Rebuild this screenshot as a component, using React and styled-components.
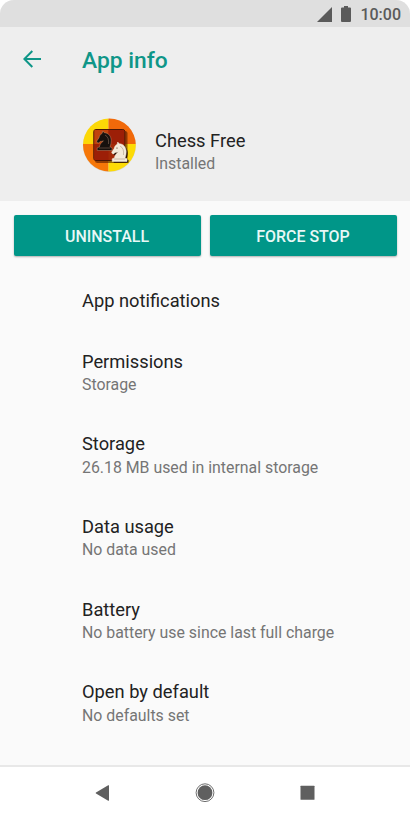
import React from "react";
import styled, { createGlobalStyle } from "styled-components";

const items = [
    { title: "App notifications" },
    { title: "Permissions", summary: "Storage" },
    { title: "Storage", summary: "26.18 MB used in internal storage" },
    { title: "Data usage", summary: "No data used" },
    { title: "Battery", summary: "No battery use since last full charge" },
    { title: "Open by default", summary: "No defaults set" },
];

const horse =
    "M1.200 19.500v-2.700l2.200-.9c.2-3 2.600-4.300 4-6.100-1 .5-2.200.7-3.200.6L2.600 12C1.600 12.200.4 11 .8 10L3 6.800C3.400 4.700 4.600 3.200 6.200 2.300L6.700 0 8.300 1.700C12.800 2 15.200 5.600 15.200 9.600c0 2.400-.5 4.500-1.200 6.300l2 .9v2.700z";

function ChessIcon() {
    return (
        <AppIcon viewBox="0 0 54 54">
            <defs>
                <clipPath id="disc">
                    <circle cx="27.4" cy="27" r="26.4" />
                </clipPath>
            </defs>
            <circle cx="27.4" cy="27.4" r="26.5" fill="#d8d5cf" />
            <g clipPath="url(#disc)">
                <rect width="26.5" height="26" fill="#fcd806" />
                <rect x="26.5" width="28" height="26" fill="#f1690a" />
                <rect y="26" width="26.5" height="28" fill="#f67708" />
                <rect x="26.5" y="26" width="28" height="28" fill="#fddb05" />
            </g>
            <rect x="13" y="13" width="32.5" height="32" rx="2.5" fill="#501800" opacity="0.6" />
            <rect x="11.8" y="11.5" width="31" height="31" rx="2" fill="#a32a08" stroke="#4a1604" />
            <rect x="12.4" y="12" width="14.1" height="14" fill="#c0420d" />
            <rect x="26.5" y="12" width="15.7" height="14" fill="#9c1f07" />
            <rect x="12.4" y="26" width="14.1" height="16" fill="#9c1f07" />
            <g transform="translate(14 13)">
                <path d={horse} fill="#17110e" stroke="#d9a27c" strokeWidth="0.4" />
                <path d="M9 4c3 1.500 4 4.500 3.500 9M3 17h11" fill="none" stroke="#9b7a66" strokeWidth="0.5" />
            </g>
            <g transform="translate(29 24)">
                <path d={horse} transform="translate(1.500 1.200)" fill="#2a1206" />
                <path d={horse} fill="#f3ead9" stroke="#f3ead9" strokeWidth="0.5" />
                <path d="M9 4c3 1.500 4 4.500 3.500 9M3 17h11" fill="none" stroke="#9c8a76" strokeWidth="0.5" />
                <circle cx="6" cy="6" r="0.6" fill="#35180c" />
            </g>
        </AppIcon>
    );
}

function App() {
    return (
        <>
            <GlobalStyle />
            <Screen>
                <StatusBar>
                    <SignalIcon viewBox="0 0 15 15">
                        <path d="M15 0v15H0z" />
                    </SignalIcon>
                    <BatteryIcon viewBox="0 0 10 16">
                        <path d="M3 0h4v1.600h2a1 1 0 0 1 1 1V15a1 1 0 0 1-1 1H1a1 1 0 0 1-1-1V2.600a1 1 0 0 1 1-1h2z" />
                    </BatteryIcon>
                    <Clock>10:00</Clock>
                </StatusBar>
                <Header>
                    <Toolbar>
                        <BackIcon viewBox="0 0 18 18">
                            <path d="M18 9H1.500M9.300 1L1.300 9l8 8" />
                        </BackIcon>
                        <PageTitle>App info</PageTitle>
                    </Toolbar>
                    <AppSummary>
                        <ChessIcon />
                        <AppText>
                            <Title>Chess Free</Title>
                            <Summary>Installed</Summary>
                        </AppText>
                    </AppSummary>
                </Header>
                <Actions>
                    <Button>UNINSTALL</Button>
                    <Button>FORCE STOP</Button>
                </Actions>
                <List>
                    {items.map((item) => (
                        <Row key={item.title}>
                            <Title>{item.title}</Title>
                            {item.summary && <Summary>{item.summary}</Summary>}
                        </Row>
                    ))}
                </List>
                <NavBar>
                    <NavIcon viewBox="0 0 20 20">
                        <path d="M16 2.700v14.600a.5.5 0 0 1-.8.4L3 10.500a.6.6 0 0 1 0-1L15.200 2.300a.5.5 0 0 1 .8.400z" />
                    </NavIcon>
                    <NavIcon viewBox="0 0 20 20">
                        <circle cx="10" cy="9.7" r="7.4" />
                        <circle cx="10" cy="9.7" r="8.9" fill="none" stroke="#5f5f5f" strokeWidth="0.9" />
                    </NavIcon>
                    <NavIcon viewBox="0 0 20 20">
                        <rect x="2.5" y="2.7" width="14" height="14" rx="0.5" />
                    </NavIcon>
                </NavBar>
            </Screen>
        </>
    );
}

export default App;

const GlobalStyle = createGlobalStyle`
    * {
        box-sizing: border-box;
    }
    body {
        margin: 0;
        background: #fff;
        font-family: Roboto, sans-serif;
    }
`;
const Screen = styled.div`
    width: 410px;
    height: 820px;
    display: flex;
    flex-direction: column;
    background: #fafafa;
    border-radius: 14px 14px 0 0;
    overflow: hidden;
`;
const StatusBar = styled.div`
    height: 27px;
    flex: none;
    display: flex;
    align-items: center;
    justify-content: flex-end;
    padding: 1px 9px 0 0;
    background: #dfdfdf;
    color: #5a5a5a;
`;
const SignalIcon = styled.svg`
    width: 15px;
    height: 15px;
    margin-right: 9px;
    fill: currentColor;
`;
const BatteryIcon = styled.svg`
    width: 10px;
    height: 16px;
    margin: -1px 9px 0 0;
    fill: currentColor;
`;
const Clock = styled.span`
    padding-top: 2px;
    font-size: 16px;
    font-weight: 500;
    line-height: 20px;
`;
const Header = styled.header`
    height: 174px;
    flex: none;
    background: #eeeeee;
`;
const Toolbar = styled.div`
    height: 64px;
    display: flex;
    align-items: center;
    padding-left: 23px;
`;
const BackIcon = styled.svg`
    width: 18px;
    height: 18px;
    margin-right: 41px;
    fill: none;
    stroke: #0f9688;
    stroke-width: 2;
`;
const PageTitle = styled.h1`
    margin: 4px 0 0;
    color: #0f9688;
    font-size: 22.8px;
    font-weight: 500;
    line-height: 28px;
`;
const AppSummary = styled.div`
    display: flex;
    gap: 19px;
    padding: 27px 0 0 82px;
`;
const AppIcon = styled.svg`
    width: 54px;
    height: 54px;
`;
const AppText = styled.div`
    padding-top: 11px;
`;
const Title = styled.div`
    color: #222222;
    font-size: 18.3px;
    line-height: 23.2px;
`;
const Summary = styled.div`
    margin: 2.2px 0 -0.8px;
    color: #757575;
    font-size: 15.87px;
    line-height: 20px;
`;
const Actions = styled.div`
    display: grid;
    grid-template-columns: 1fr 1fr;
    gap: 9px;
    padding: 13.5px 13.5px 0;
`;
const Button = styled.button`
    height: 41px;
    padding: 2px 0 0;
    border: 0;
    border-radius: 2px;
    background: #009688;
    box-shadow: 0 1px 2px rgba(0, 0, 0, 0.3);
    color: #e8f8f6;
    font-family: inherit;
    font-size: 15.95px;
    font-weight: 500;
`;
const List = styled.div`
    flex: 1;
    padding: 14.2px 0 0 82px;
`;
const Row = styled.div`
    padding: 19px 0;
`;
const NavBar = styled.nav`
    height: 55px;
    flex: none;
    display: flex;
    justify-content: center;
    gap: 82.5px;
    padding-top: 16px;
    background: #fff;
    border-top: 2px solid #e8e8e8;
`;
const NavIcon = styled.svg`
    width: 20px;
    height: 20px;
    fill: #5f5f5f;
`;
